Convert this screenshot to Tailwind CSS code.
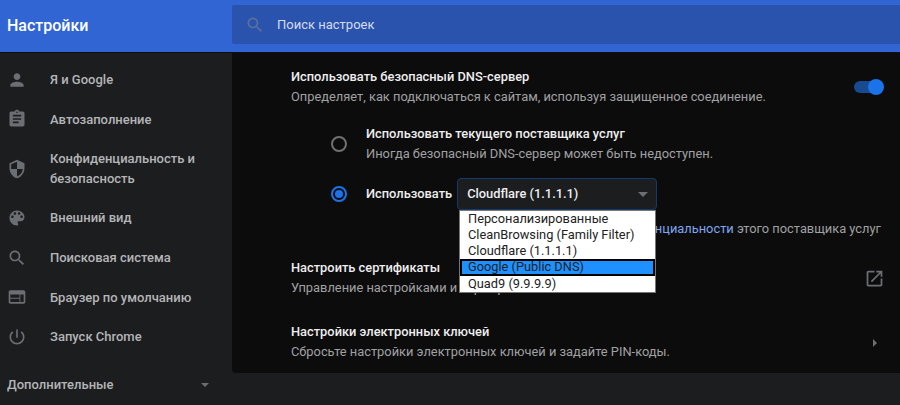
<!DOCTYPE html>
<html lang="ru">
<head>
    <meta charset="UTF-8">
    <title>Настройки</title>
    <script src="https://cdn.jsdelivr.net/npm/@tailwindcss/browser@4"></script>
</head>
<body class="w-[900px] h-[405px] overflow-hidden bg-[#1c1d1f] font-['Roboto',sans-serif] text-[13px]">
    <!-- Header -->
    <header class="flex h-[53px] bg-[#3065d3] border-b border-[#0d0f14]">
        <h1 class="w-[232px] pl-[7px] pt-[14px] text-[16px] leading-[24px] font-medium text-white">Настройки</h1>
        <div class="flex items-center w-[668px] h-[39px] mt-[5px] rounded-l-[2px] bg-[#2a53ae]">
            <svg class="ml-[13px] w-[20px] h-[20px] fill-[#5b6f9c]" viewBox="0 0 24 24"><path d="M15.5 14h-.79l-.28-.27C15.41 12.59 16 11.11 16 9.5 16 5.91 13.09 3 9.5 3S3 5.91 3 9.5 5.91 16 9.5 16c1.61 0 3.09-.59 4.23-1.57l.27.28v.79l5 4.99L20.49 19l-4.99-5zm-6 0C7.01 14 5 11.99 5 9.5S7.01 5 9.5 5 14 7.01 14 9.5 11.99 14 9.5 14z"/></svg>
            <span class="ml-[12px] text-[#d5dcec]">Поиск настроек</span>
        </div>
    </header>

    <div class="flex h-[352px]">
        <!-- Sidebar -->
        <nav class="w-[232px] shrink-0 pt-[7px] font-medium text-[#b4b5b7]">
            <a class="flex items-center h-[39.5px] pl-[7px]">
                <svg class="w-[20px] h-[20px] fill-[#6b6e73]" viewBox="0 0 24 24"><path d="M12 12c2.21 0 4-1.79 4-4s-1.79-4-4-4-4 1.79-4 4 1.79 4 4 4zm0 2c-2.67 0-8 1.34-8 4v2h16v-2c0-2.66-5.33-4-8-4z"/></svg>
                <span class="ml-[23px]">Я и Google</span>
            </a>
            <a class="flex items-center h-[39.5px] pl-[7px]">
                <svg class="w-[20px] h-[20px] fill-[#6b6e73]" viewBox="0 0 24 24"><path d="M19 3h-4.18C14.4 1.84 13.3 1 12 1c-1.3 0-2.4.84-2.82 2H5c-1.1 0-2 .9-2 2v14c0 1.1.9 2 2 2h14c1.1 0 2-.9 2-2V5c0-1.1-.9-2-2-2zm-7 0c.55 0 1 .45 1 1s-.45 1-1 1-1-.45-1-1 .45-1 1-1zm2 14H7v-2h7v2zm3-4H7v-2h10v2zm0-4H7V7h10v2z"/></svg>
                <span class="ml-[23px]">Автозаполнение</span>
            </a>
            <a class="flex items-center h-[59px] pl-[7px]">
                <svg class="w-[20px] h-[20px] fill-[#6b6e73]" viewBox="0 0 24 24"><path d="M12 1L3 5v6c0 5.55 3.84 10.74 9 12 5.16-1.26 9-6.45 9-12V5l-9-4zm0 10.99h7c-.53 4.12-3.28 7.79-7 8.94V12H5V6.3l7-3.11v8.8z"/></svg>
                <span class="ml-[23px] w-[170px] leading-[20px]">Конфиденциальность и безопасность</span>
            </a>
            <a class="flex items-center h-[40px] pl-[7px]">
                <svg class="w-[20px] h-[20px] fill-[#6b6e73]" viewBox="0 0 24 24"><path d="M12 3c-4.97 0-9 4.03-9 9s4.03 9 9 9c.83 0 1.5-.67 1.5-1.5 0-.39-.15-.74-.39-1.01-.23-.26-.38-.61-.38-.99 0-.83.67-1.5 1.5-1.5H16c2.76 0 5-2.24 5-5 0-4.42-4.03-8-9-8zm-5.5 9c-.83 0-1.5-.67-1.5-1.5S5.67 9 6.5 9 8 9.67 8 10.5 7.33 12 6.5 12zm3-4C8.67 8 8 7.33 8 6.5S8.67 5 9.5 5s1.5.67 1.5 1.5S10.33 8 9.5 8zm5 0c-.83 0-1.5-.67-1.5-1.5S13.67 5 14.5 5s1.5.67 1.5 1.5S15.33 8 14.5 8zm3 4c-.83 0-1.5-.67-1.5-1.5S16.67 9 17.5 9s1.5.67 1.5 1.5-.67 1.5-1.5 1.5z"/></svg>
                <span class="ml-[23px]">Внешний вид</span>
            </a>
            <a class="flex items-center h-[39.5px] pl-[7px]">
                <svg class="w-[20px] h-[20px] fill-[#6b6e73]" viewBox="0 0 24 24"><path d="M15.5 14h-.79l-.28-.27C15.41 12.59 16 11.11 16 9.5 16 5.91 13.09 3 9.5 3S3 5.91 3 9.5 5.91 16 9.5 16c1.61 0 3.09-.59 4.23-1.57l.27.28v.79l5 4.99L20.49 19l-4.99-5zm-6 0C7.01 14 5 11.99 5 9.5S7.01 5 9.5 5 14 7.01 14 9.5 11.99 14 9.5 14z"/></svg>
                <span class="ml-[23px]">Поисковая система</span>
            </a>
            <a class="flex items-center h-[39.5px] pl-[7px]">
                <svg class="w-[20px] h-[20px] fill-[#6b6e73]" viewBox="0 0 24 24"><path d="M20 4H4c-1.1 0-2 .9-2 2v12c0 1.1.9 2 2 2h16c1.1 0 2-.9 2-2V6c0-1.1-.9-2-2-2zM4 18v-4h11v4H4zm0-5V9h11v4H4zm16 5h-4V9h4v9z"/></svg>
                <span class="ml-[23px]">Браузер по умолчанию</span>
            </a>
            <a class="flex items-center h-[39.5px] pl-[7px]">
                <svg class="w-[20px] h-[20px] fill-[#6b6e73]" viewBox="0 0 24 24"><path d="M13 3h-2v10h2V3zm4.83 2.17l-1.42 1.42C17.99 7.86 19 9.81 19 12c0 3.87-3.13 7-7 7s-7-3.13-7-7c0-2.19 1.01-4.14 2.58-5.42L6.17 5.17C4.23 6.82 3 9.26 3 12c0 4.97 4.03 9 9 9s9-4.03 9-9c0-2.74-1.23-5.18-3.17-6.83z"/></svg>
                <span class="ml-[23px]">Запуск Chrome</span>
            </a>
            <div class="flex items-center justify-between h-[20px] mt-[18px] pl-[7px] pr-[23px]">
                <span>Дополнительные</span>
                <span class="w-0 h-0 border-x-[4px] border-x-transparent border-t-[4px] border-t-[#6b6e73]"></span>
            </div>
        </nav>

        <!-- Main card -->
        <main class="relative w-[668px] h-[320px] rounded-bl-[4px] bg-[#0c0c0c] pl-[59px] pr-[18px] pt-[14px] text-[12.85px] text-[#a0a1a3]">
            <section class="flex items-center justify-between h-[40px]">
                <div class="leading-[20px]">
                    <p class="font-medium text-[#eeeeef]">Использовать безопасный DNS-сервер</p>
                    <p>Определяет, как подключаться к сайтам, используя защищенное соединение.</p>
                </div>
                <span class="relative w-[28px] h-[12px] rounded-full bg-[#174a8f]">
                    <span class="absolute right-[-2px] top-[-2px] w-[16px] h-[16px] rounded-full bg-[#1a73e8]"></span>
                </span>
            </section>

            <section class="flex items-center h-[40px] mt-[17px] pl-[40px]">
                <span class="w-[16px] h-[16px] rounded-full border-2 border-[#6f7072]"></span>
                <div class="ml-[19px] leading-[20px]">
                    <p class="font-medium text-[#eeeeef]">Использовать текущего поставщика услуг</p>
                    <p>Иногда безопасный DNS-сервер может быть недоступен.</p>
                </div>
            </section>

            <section class="flex items-center h-[32px] mt-[14px] pl-[40px]">
                <span class="flex items-center justify-center w-[16px] h-[16px] rounded-full border-2 border-[#1a73e8]">
                    <span class="w-[8px] h-[8px] rounded-full bg-[#1a73e8]"></span>
                </span>
                <span class="ml-[19px] font-medium text-[#eeeeef]">Использовать</span>
                <div class="flex items-center justify-between w-[200px] h-[32px] ml-[5px] pl-[9px] pr-[8px] rounded-[4px] border border-[#123a70] bg-[#1c1d1f] font-medium text-[#eeeeef]">
                    <span>Cloudflare (1.1.1.1)</span>
                    <span class="w-0 h-0 border-x-[5px] border-x-transparent border-t-[5px] border-t-[#6b6e73]"></span>
                </div>
            </section>
            <p class="h-[20px] mt-[9px] pr-[1px] leading-[20px] text-right"><a class="text-[#7fa6f0]">Политика конфиденциальности</a> этого поставщика услуг</p>

            <section class="flex items-center justify-between h-[40px] mt-[19px]">
                <div class="leading-[20px]">
                    <p class="font-medium text-[#eeeeef]">Настроить сертификаты</p>
                    <p>Управление настройками и сертификатами HTTPS/SSL</p>
                </div>
                <svg class="w-[21px] h-[21px] mr-[-3px] fill-[#6b6e73]" viewBox="0 0 24 24"><path d="M19 19H5V5h7V3H5c-1.11 0-2 .9-2 2v14c0 1.1.89 2 2 2h14c1.1 0 2-.9 2-2v-7h-2v7zM14 3v2h3.59l-9.83 9.83 1.41 1.41L19 6.41V10h2V3h-7z"/></svg>
            </section>

            <section class="flex items-center justify-between h-[40px] mt-[24px]">
                <div class="leading-[20px]">
                    <p class="font-medium text-[#eeeeef]">Настройки электронных ключей</p>
                    <p>Сбросьте настройки электронных ключей и задайте PIN-коды.</p>
                </div>
                <span class="w-0 h-0 mr-[5px] mt-[1px] border-y-[4px] border-y-transparent border-l-[4px] border-l-[#6b6e73]"></span>
            </section>

            <!-- Open select list -->
            <ul class="absolute left-[227px] top-[157px] w-[197px] h-[83px] bg-white border border-[#767676] text-[12.8px] leading-[16px] text-[#222]">
                <li class="pl-[8px]">Персонализированные</li>
                <li class="pl-[8px]">CleanBrowsing (Family Filter)</li>
                <li class="pl-[8px]">Cloudflare (1.1.1.1)</li>
                <li class="h-[17px] pl-[8px] bg-[#1e90ff] shadow-[inset_0_0_0_2px_#000]">Google (Public DNS)</li>
                <li class="pl-[8px]">Quad9 (9.9.9.9)</li>
            </ul>
        </main>
    </div>
</body>
</html>
